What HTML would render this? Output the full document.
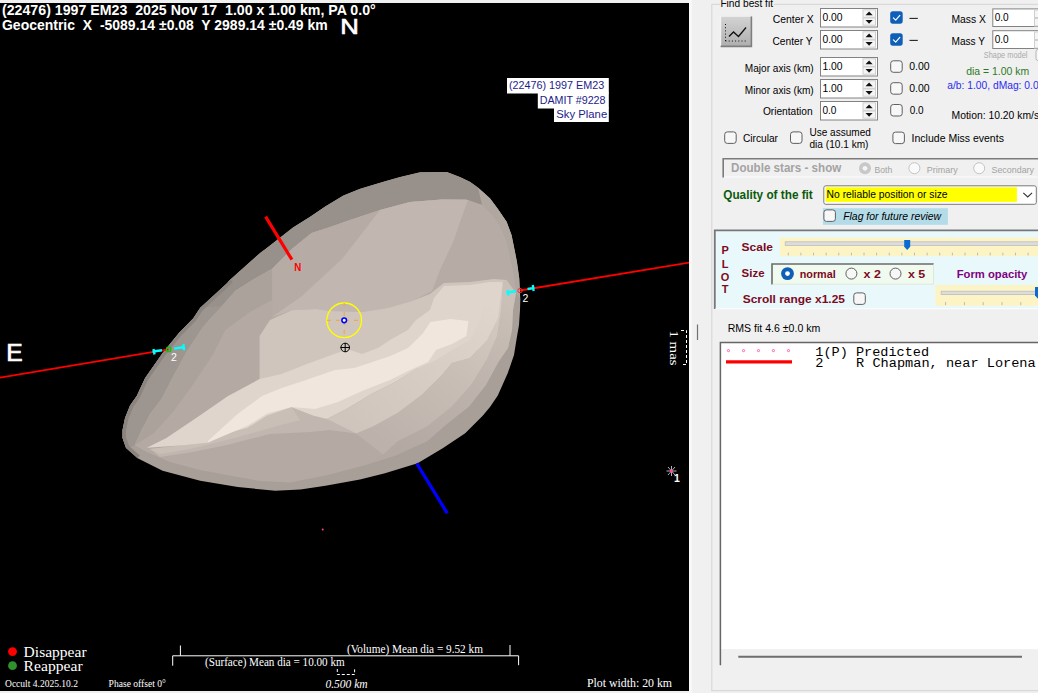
<!DOCTYPE html>
<html><head><meta charset="utf-8"><title>Occult</title>
<style>
html,body{margin:0;padding:0;}
body{width:1038px;height:693px;overflow:hidden;background:#f0f0f0;font-family:"Liberation Sans",sans-serif;position:relative;}
#plot{position:absolute;left:0;top:3px;width:689px;height:688px;background:#000;overflow:hidden;}
#plotin{position:absolute;left:0;top:-3px;width:689px;height:693px;}
#plotin svg{position:absolute;left:0;top:0;}
.t1{position:absolute;color:#fff;font:bold 14px "Liberation Sans",sans-serif;white-space:pre;line-height:16px;}
.big{position:absolute;color:#fff;font:23px "Liberation Sans",sans-serif;line-height:26px;-webkit-text-stroke:0.5px #fff;}
.lab{position:absolute;background:#fff;color:#1c1c8a;font:11px "Liberation Sans",sans-serif;height:15px;line-height:15px;text-align:right;box-sizing:border-box;padding-right:3px;white-space:pre;}
.ser{position:absolute;color:#fff;font-family:"Liberation Serif",serif;white-space:pre;line-height:1.15;}

</style></head>
<body>
<div id="plot"><div id="plotin">
<svg width="689" height="693" viewBox="0 0 689 693">
<defs><clipPath id="oc"><polygon points="420.0,172.3 447.0,172.0 460.0,177.0 470.0,181.7 478.0,187.6 490.0,198.3 498.0,209.0 506.7,221.7 511.6,235.0 515.0,251.7 517.0,262.0 519.3,278.3 520.3,300.0 520.0,310.0 519.0,325.0 516.7,338.3 514.0,355.0 507.8,373.0 497.8,395.6 490.0,407.0 482.7,415.7 465.2,433.2 442.7,448.2 417.6,463.3 385.0,473.3 360.0,479.5 325.5,485.8 300.4,489.5 275.3,490.8 237.8,487.0 200.2,480.8 162.6,470.8 137.6,458.2 126.0,448.0 122.5,438.0 122.5,430.0 125.0,418.0 130.0,405.6 136.7,396.0 145.1,378.0 162.6,353.0 178.9,333.0 193.3,318.3 200.2,307.8 226.7,283.5 230.3,279.5 260.3,252.7 266.7,248.0 292.9,227.6 310.0,216.7 325.5,206.3 343.3,195.6 360.0,188.8 385.0,181.3 400.0,177.0" fill="#000" /></clipPath><linearGradient id="gA" gradientUnits="userSpaceOnUse" x1="508" y1="300" x2="400" y2="450"><stop offset="0" stop-color="#cbc0b8"/><stop offset="0.45" stop-color="#bfb4ad"/><stop offset="1" stop-color="#b3a9a2"/></linearGradient><linearGradient id="gB" gradientUnits="userSpaceOnUse" x1="498" y1="300" x2="380" y2="440"><stop offset="0" stop-color="#d6cbc2"/><stop offset="0.5" stop-color="#c8bdb5"/><stop offset="1" stop-color="#bdb2ab"/></linearGradient><linearGradient id="gC" gradientUnits="userSpaceOnUse" x1="490" y1="300" x2="350" y2="420"><stop offset="0" stop-color="#e0d5cc"/><stop offset="1" stop-color="#d0c5bc"/></linearGradient></defs>
<polygon points="420.0,172.3 447.0,172.0 460.0,177.0 470.0,181.7 478.0,187.6 490.0,198.3 498.0,209.0 506.7,221.7 511.6,235.0 515.0,251.7 517.0,262.0 519.3,278.3 520.3,300.0 520.0,310.0 519.0,325.0 516.7,338.3 514.0,355.0 507.8,373.0 497.8,395.6 490.0,407.0 482.7,415.7 465.2,433.2 442.7,448.2 417.6,463.3 385.0,473.3 360.0,479.5 325.5,485.8 300.4,489.5 275.3,490.8 237.8,487.0 200.2,480.8 162.6,470.8 137.6,458.2 126.0,448.0 122.5,438.0 122.5,430.0 125.0,418.0 130.0,405.6 136.7,396.0 145.1,378.0 162.6,353.0 178.9,333.0 193.3,318.3 200.2,307.8 226.7,283.5 230.3,279.5 260.3,252.7 266.7,248.0 292.9,227.6 310.0,216.7 325.5,206.3 343.3,195.6 360.0,188.8 385.0,181.3 400.0,177.0" fill="#a89f98" />
<g clip-path="url(#oc)">
<polygon points="126.0,448.0 122.5,438.0 122.5,430.0 125.0,418.0 130.0,405.6 136.7,396.0 145.1,378.0 162.6,353.0 178.9,333.0 193.3,318.3 200.2,307.8 226.7,283.5 230.3,279.5 260.3,252.7 266.7,248.0 292.9,227.6 310.0,216.7 325.5,206.3 343.3,195.6 360.0,188.8 385.0,181.3 400.0,177.0 420.0,172.3 447.0,172.0 460.0,177.0 470.0,181.7 478.0,187.6 490.0,198.3 498.0,209.0 506.7,221.7 511.6,235.0 515.0,251.7 517.0,262.0 519.3,278.3 520.3,300.0 516.0,293.0 514.5,277.0 510.5,259.0 506.5,241.0 500.5,227.0 492.5,215.0 482.0,205.0 466.0,199.5 442.0,199.5 410.0,202.0 380.0,210.0 350.0,220.0 330.0,227.0 311.5,233.1 291.8,249.0 272.2,268.7 254.0,279.0 235.4,290.7 222.0,306.0 203.6,326.0 186.4,352.0 171.7,379.0 162.0,398.0 150.0,414.0 142.0,429.0 134.5,445.3" fill="#98908a" />
<polygon points="126.0,448.0 122.5,438.0 122.5,430.0 125.0,418.0 130.0,405.6 136.7,396.0 145.1,378.0 162.6,353.0 178.9,333.0 193.3,318.3 200.2,307.8 222.0,306.0 203.6,326.0 186.4,352.0 171.7,379.0 162.0,398.0 150.0,414.0 142.0,429.0 134.5,445.3" fill="#9d958f" />
<polyline points="137.6,458.2 126.0,448.0 122.5,438.0 122.5,430.0 125.0,418.0 130.0,405.6 136.7,396.0 145.1,378.0 162.6,353.0 178.9,333.0 193.3,318.3 200.2,307.8 226.7,283.5 230.3,279.5" fill="none" stroke="#8c847f" stroke-width="7" stroke-linejoin="round" />
<polygon points="478.0,187.6 490.0,198.3 498.0,209.0 506.7,221.7 511.6,235.0 515.0,251.7 517.0,262.0 519.3,278.3 520.3,300.0 516.0,293.0 514.5,277.0 510.5,259.0 506.5,241.0 500.5,227.0 492.5,215.0 482.0,205.0" fill="#b0a7a1" />
<polygon points="134.5,445.3 142.0,429.0 150.0,414.0 162.0,398.0 171.7,379.0 186.4,352.0 203.6,326.0 222.0,306.0 235.4,290.7 254.0,279.0 272.2,268.7 291.8,249.0 311.5,233.1 330.0,227.0 350.0,220.0 380.0,210.0 410.0,202.0 442.0,199.5 466.0,199.5 482.0,205.0 492.5,215.0 500.5,227.0 506.5,241.0 510.5,259.0 514.5,277.0 516.0,293.0 513.0,310.0 512.0,330.0 508.0,348.0 498.4,362.0 486.2,384.5 469.0,406.6 447.0,423.8 427.3,440.9 395.4,455.6 363.6,465.4 326.8,475.3 290.0,482.6 260.0,481.0 232.0,476.0 200.0,470.0 170.0,462.0 146.8,452.0" fill="#b4aaa3" />
<polygon points="134.5,445.3 142.0,429.0 150.0,414.0 162.0,398.0 171.7,379.0 186.4,352.0 203.6,326.0 222.0,306.0 235.4,290.7 254.0,279.0 272.2,268.7 272.0,300.0 250.0,312.0 225.3,330.0 213.0,354.5 193.4,384.0 173.8,410.9 154.1,433.0" fill="#aba29b" />
<polygon points="272.2,268.7 291.8,249.0 311.5,233.1 330.0,227.0 350.0,220.0 380.0,210.0 410.0,202.0 442.0,199.5 466.0,199.5 482.0,205.0 492.5,215.0 500.5,227.0 506.5,241.0 510.5,259.0 514.5,277.0 516.0,293.0 513.0,310.0 512.0,330.0 508.0,348.0 470.0,300.0 330.0,330.0 272.2,317.7" fill="#b6aca5" />
<polygon points="380.0,210.0 410.0,202.0 442.0,199.5 468.0,200.0 460.0,222.0 453.5,241.0 440.0,270.0 432.0,291.0 412.0,301.0 388.0,308.0 362.0,312.0 330.0,311.0 316.0,309.0 291.8,310.3 272.0,317.0 302.0,296.0 342.0,259.0 356.0,241.0" fill="#c2b7b0" />
<polygon points="259.6,380.0 259.6,336.0 270.0,320.0 291.8,310.3 316.0,309.0 330.0,311.0 362.0,312.0 388.0,308.0 412.0,301.0 430.0,294.0 440.0,286.0 444.0,283.0 470.0,282.0 494.0,279.0 506.5,280.0 503.0,283.0 501.0,310.0 497.0,336.0 486.4,360.0 470.0,340.0 400.0,360.0 300.0,380.0" fill="#d0c5bc" />
<polygon points="516.0,293.0 513.0,310.0 512.0,330.0 508.0,348.0 498.4,362.0 486.2,384.5 469.0,406.6 447.0,423.8 427.3,440.9 395.4,455.6 363.6,465.4 383.2,454.4 397.9,440.9 427.3,426.2 451.8,406.6 471.5,384.5 486.4,360.0 497.0,336.0 501.0,310.0 503.0,283.0 506.5,280.0" fill="url(#gA)" />
<polygon points="503.0,283.0 501.0,310.0 497.0,336.0 486.4,360.0 471.5,384.5 451.8,406.6 427.3,426.2 397.9,440.9 383.2,454.4 356.2,433.6 356.2,433.6 373.4,426.2 397.9,412.7 422.4,394.3 442.0,374.7 451.8,363.0 470.0,358.0 487.0,340.0 497.0,320.0 500.0,284.0" fill="url(#gB)" />
<polygon points="150.0,449.0 183.6,445.3 208.1,442.8 227.7,433.0 247.3,428.1 266.9,415.8 291.5,407.2 313.5,415.8 326.8,418.9 356.2,433.6 330.0,430.0 310.0,432.0 270.0,434.0 226.7,445.0 190.0,452.5 160.0,457.0" fill="#c2b7b0" />
<polygon points="150.0,449.0 183.6,445.3 208.1,442.8 227.7,433.0 247.3,428.1 266.9,415.8 291.5,407.2 300.0,420.0 270.0,428.0 226.7,440.0 190.0,449.0 160.0,454.0" fill="#cabfb7" />
<polygon points="146.8,447.7 166.4,437.9 195.8,418.3 227.7,396.2 259.6,379.0 281.7,374.1 306.2,364.3 340.0,352.1 350.0,350.0 362.0,354.0 378.0,348.0 390.0,340.0 408.0,330.0 416.0,320.0 430.0,310.0 434.0,298.0 444.0,286.0 470.0,285.0 490.0,282.0 502.5,282.0 498.0,318.0 486.0,338.0 468.0,354.0 450.0,362.0 436.0,372.0 417.5,368.6 395.4,382.1 370.9,394.3 346.4,409.0 326.8,418.9 313.5,415.8 291.5,407.2 266.9,415.8 247.3,428.1 227.7,433.0 208.1,442.8 183.6,445.3 146.8,447.7" fill="#e0d5cc" />
<polygon points="500.0,284.0 497.0,320.0 487.0,340.0 470.0,358.0 451.8,363.0 442.0,374.7 422.4,394.3 397.9,412.7 373.4,426.2 356.2,433.6 326.8,418.9 346.4,409.0 370.9,394.3 395.4,382.1 417.5,368.6 436.0,360.0 452.0,350.0 470.0,340.0 480.0,320.0 486.0,290.0" fill="url(#gC)" />
<polygon points="208.0,441.0 237.5,414.0 262.0,396.0 281.7,388.0 303.0,381.0 335.0,370.0 354.3,368.0 390.4,356.0 408.0,348.0 422.4,334.0 430.4,322.0 450.3,319.0 468.4,321.0 466.4,336.0 452.0,344.0 436.0,350.0 428.0,362.0 408.0,371.0 390.0,380.0 362.0,391.0 338.0,402.0 315.0,409.0 291.5,407.0 267.0,413.5 247.0,426.0 208.0,442.5" fill="#f0e6dd" />
</g>
<line x1="265.6" y1="216.7" x2="291.9" y2="259.7" stroke="#f00" stroke-width="3.2"/>
<line x1="416.7" y1="463.3" x2="447.3" y2="513.3" stroke="#00f" stroke-width="3.2"/>
<text x="294.3" y="270.8" fill="#f00" font-family="Liberation Sans" font-weight="bold" font-size="11" textLength="7" lengthAdjust="spacingAndGlyphs">N</text>
<line x1="0" y1="377.7" x2="168.5" y2="349.3" stroke="#f00" stroke-width="1.8"/>
<line x1="520" y1="290.5" x2="689.3" y2="262.5" stroke="#f00" stroke-width="1.8"/>
<path d="M152.5 351.5 L162 350.2 M153.5 349 L154.5 354.5" stroke="#0ff" stroke-width="2.4" fill="none"/>
<path d="M174 348.6 L184.5 347 M183.3 344.3 L184.2 350.2" stroke="#0ff" stroke-width="2.4" fill="none"/>
<circle cx="168.6" cy="349.4" r="2.3" fill="none" stroke="#0c0" stroke-width="1.2"/>
<text x="171" y="361" fill="#fff" font-family="Liberation Sans" font-size="10.5">2</text>
<path d="M506.5 292.8 L516 291.3 M507.6 290 L508.6 295.5" stroke="#0ff" stroke-width="2.4" fill="none"/>
<path d="M527.5 289 L534.5 287.9 M532.8 285 L533.7 291" stroke="#0ff" stroke-width="2.4" fill="none"/>
<circle cx="520" cy="290.6" r="2.2" fill="none" stroke="#e33" stroke-width="1"/>
<text x="522.5" y="302" fill="#fff" font-family="Liberation Sans" font-size="10.5">2</text>
<circle cx="344.2" cy="320.3" r="17.3" fill="none" stroke="#ff0" stroke-width="1.4"/>
<path d="M327 320.3 H361.5 M344.2 303 V337.5" stroke="#f5a623" stroke-width="1" stroke-dasharray="4 5" fill="none"/>
<circle cx="344.2" cy="320.3" r="2.3" fill="#fff" stroke="#00f" stroke-width="1.6"/>
<circle cx="345.2" cy="347.5" r="4.3" fill="none" stroke="#000" stroke-width="1"/>
<path d="M340.5 347.5 H350 M345.2 343 V352" stroke="#000" stroke-width="1" fill="none"/>
<circle cx="322.7" cy="529.5" r="1" fill="#f48"/>
<path d="M668 467 L675 475 M675 467 L668 475 M671.5 466 V476 M666.5 471 H676.5" stroke="#ddd" stroke-width="0.8"/>
<circle cx="671.5" cy="471" r="1.6" fill="#f4a"/>
<text x="674" y="482" fill="#fff" font-family="Liberation Sans" font-weight="bold" font-size="10.5">1</text>
<circle cx="12.5" cy="651.6" r="4.4" fill="#f00"/>
<circle cx="12.5" cy="665.7" r="4.4" fill="#2f922f"/>
<path d="M172.7 665.7 V655.8 H518.6 V665.2 M180.4 655.8 V645.5 M510 655.8 V645" stroke="#fff" stroke-width="1" fill="none"/>
<path d="M337.3 669 V674.5 H354.6 V669" stroke="#fff" stroke-width="1" fill="none" stroke-dasharray="3 2"/>
<path d="M681 330.5 H686.5 V364.5 H681" stroke="#fff" stroke-width="1" fill="none" stroke-dasharray="3 2"/>
</svg>
<svg width="689" height="693" viewBox="0 0 689 693">
<text x="2" y="14.5" font-family="Liberation Sans" font-size="14.3" fill="#fff" font-weight="bold" font-style="normal" xml:space="preserve" textLength="373.7" lengthAdjust="spacingAndGlyphs" >(22476) 1997 EM23  2025 Nov 17  1.00 x 1.00 km, PA 0.0°</text>
<text x="2" y="30" font-family="Liberation Sans" font-size="14.3" fill="#fff" font-weight="bold" font-style="normal" xml:space="preserve" textLength="325.7" lengthAdjust="spacingAndGlyphs" >Geocentric  X  -5089.14 ±0.08  Y 2989.14 ±0.49 km</text>
<text x="340.3" y="33.7" font-family="Liberation Sans" font-size="22.6" fill="#fff" font-weight="normal" font-style="normal" xml:space="preserve" textLength="18.6" lengthAdjust="spacingAndGlyphs" stroke="#fff" stroke-width="0.7">N</text>
<text x="6.2" y="361" font-family="Liberation Sans" font-size="23.4" fill="#fff" font-weight="normal" font-style="normal" xml:space="preserve" textLength="16.4" lengthAdjust="spacingAndGlyphs" stroke="#fff" stroke-width="0.7">E</text>
<rect x="507" y="78" width="101.8" height="15.5" fill="#fff"/><rect x="537.8" y="92.5" width="71" height="16" fill="#fff"/><rect x="554" y="107.5" width="54.8" height="14.5" fill="#fff"/>
<text x="508.9" y="88.9" font-family="Liberation Sans" font-size="11" fill="#1c1c8a" font-weight="normal" font-style="normal" xml:space="preserve" textLength="95.3" lengthAdjust="spacingAndGlyphs" >(22476) 1997 EM23</text>
<text x="539.7" y="103.9" font-family="Liberation Sans" font-size="11" fill="#1c1c8a" font-weight="normal" font-style="normal" xml:space="preserve" textLength="65.8" lengthAdjust="spacingAndGlyphs" >DAMIT #9228</text>
<text x="556.3" y="117.8" font-family="Liberation Sans" font-size="11" fill="#1c1c8a" font-weight="normal" font-style="normal" xml:space="preserve" textLength="50.9" lengthAdjust="spacingAndGlyphs" >Sky Plane</text>
<text x="23.6" y="656.6" font-family="Liberation Serif" font-size="14.6" fill="#fff" font-weight="normal" font-style="normal" xml:space="preserve" textLength="63" lengthAdjust="spacingAndGlyphs" >Disappear</text>
<text x="23.6" y="670.8" font-family="Liberation Serif" font-size="14.6" fill="#fff" font-weight="normal" font-style="normal" xml:space="preserve" textLength="59" lengthAdjust="spacingAndGlyphs" >Reappear</text>
<text x="5" y="687" font-family="Liberation Serif" font-size="10" fill="#fff" font-weight="normal" font-style="normal" xml:space="preserve" textLength="73" lengthAdjust="spacingAndGlyphs" >Occult 4.2025.10.2</text>
<text x="108.6" y="687" font-family="Liberation Serif" font-size="10" fill="#fff" font-weight="normal" font-style="normal" xml:space="preserve" textLength="57.3" lengthAdjust="spacingAndGlyphs" >Phase offset 0°</text>
<text x="205" y="665.7" font-family="Liberation Serif" font-size="11.5" fill="#fff" font-weight="normal" font-style="normal" xml:space="preserve" textLength="139.6" lengthAdjust="spacingAndGlyphs" >(Surface) Mean dia = 10.00 km</text>
<text x="346.9" y="652.7" font-family="Liberation Serif" font-size="11.5" fill="#fff" font-weight="normal" font-style="normal" xml:space="preserve" textLength="136" lengthAdjust="spacingAndGlyphs" >(Volume) Mean dia = 9.52 km</text>
<text x="325.4" y="688.2" font-family="Liberation Serif" font-size="12" fill="#fff" font-weight="normal" font-style="italic" xml:space="preserve" textLength="42.3" lengthAdjust="spacingAndGlyphs" >0.500 km</text>
<text x="587" y="687.4" font-family="Liberation Serif" font-size="12.5" fill="#fff" font-weight="normal" font-style="normal" xml:space="preserve" textLength="85" lengthAdjust="spacingAndGlyphs" >Plot width: 20 km</text>
<g transform="translate(669.5,330.5) rotate(90)"><text x="0" y="0" font-family="Liberation Serif" font-size="13" fill="#fff" font-weight="normal" font-style="normal" xml:space="preserve" textLength="35" lengthAdjust="spacingAndGlyphs" >1 mas</text></g>
</svg>
</div></div>
<svg id="panel" width="349" height="693" viewBox="689 0 349 693" style="position:absolute;left:689px;top:0;">
<rect x="689" y="0" width="349" height="693" fill="#f0f0f0" />
<rect x="689" y="0" width="3" height="693" fill="#f8f8f8" />
<line x1="697.5" y1="324.5" x2="697.5" y2="340" stroke="#707070" stroke-width="1.2" />
<path d="M720 4.3 H711.8 V690.7 H1040 M774 4.3 H1040" stroke="#d9d9d9" stroke-width="1.2" fill="none"/>
<text x="720.4" y="7.24" font-family="Liberation Sans" font-size="11" fill="#000" font-weight="normal" font-style="normal" text-anchor="start" xml:space="preserve" textLength="52.6" lengthAdjust="spacingAndGlyphs" >Find best fit</text>
<defs><linearGradient id="bg1" x1="0" y1="0" x2="0" y2="1"><stop offset="0" stop-color="#d4d4d4"/><stop offset="1" stop-color="#aeaeae"/></linearGradient></defs>
<rect x="720" y="15.5" width="32" height="31.5" fill="url(#bg1)" />
<path d="M720.5 46.5 V16 H751.5" stroke="#f4f4f4" stroke-width="1.4" fill="none"/>
<path d="M720.8 46.4 H751.4 V16.4" stroke="#7e7e7e" stroke-width="1.6" fill="none"/>
<path d="M725.5 24 V41.5 M725.5 41 H747" stroke="#111" stroke-width="1" stroke-dasharray="1 2.2" fill="none"/>
<path d="M729 36.5 L733.5 32 L738.5 36.5 L746 27.5" stroke="#111" stroke-width="1.3" fill="none"/>
<text x="772.7" y="22.74" font-family="Liberation Sans" font-size="11" fill="#000" font-weight="normal" font-style="normal" text-anchor="start" xml:space="preserve" textLength="41" lengthAdjust="spacingAndGlyphs" >Center X</text>
<text x="772.5" y="44.54" font-family="Liberation Sans" font-size="11" fill="#000" font-weight="normal" font-style="normal" text-anchor="start" xml:space="preserve" textLength="40" lengthAdjust="spacingAndGlyphs" >Center Y</text>
<text x="744.8" y="71.84" font-family="Liberation Sans" font-size="11" fill="#000" font-weight="normal" font-style="normal" text-anchor="start" xml:space="preserve" textLength="68.9" lengthAdjust="spacingAndGlyphs" >Major axis (km)</text>
<text x="744.8" y="93.64" font-family="Liberation Sans" font-size="11" fill="#000" font-weight="normal" font-style="normal" text-anchor="start" xml:space="preserve" textLength="68.9" lengthAdjust="spacingAndGlyphs" >Minor axis (km)</text>
<text x="762.9" y="114.54" font-family="Liberation Sans" font-size="11" fill="#000" font-weight="normal" font-style="normal" text-anchor="start" xml:space="preserve" textLength="49.8" lengthAdjust="spacingAndGlyphs" >Orientation</text>
<rect x="820.5" y="8.5" width="57" height="18.5" fill="#fff" stroke="#828282" stroke-width="1" />
<text x="822.4" y="21.09" font-family="Liberation Sans" font-size="11" fill="#000" font-weight="normal" font-style="normal" text-anchor="start" xml:space="preserve" textLength="20.1" lengthAdjust="spacingAndGlyphs" >0.00</text>
<rect x="863.0" y="9.8" width="12.5" height="7.5" fill="#f5f5f5" stroke="#cfcfcf" stroke-width="1" />
<rect x="863.0" y="18" width="12.5" height="7.2" fill="#f5f5f5" stroke="#cfcfcf" stroke-width="1" />
<path d="M865.5 15.35 L869.1 11.55 L872.7 15.35 Z" fill="#111"/>
<path d="M865.5 19.95 L869.1 23.75 L872.7 19.95 Z" fill="#111"/>
<rect x="820.5" y="30.5" width="57" height="18.5" fill="#fff" stroke="#828282" stroke-width="1" />
<text x="822.4" y="43.09" font-family="Liberation Sans" font-size="11" fill="#000" font-weight="normal" font-style="normal" text-anchor="start" xml:space="preserve" textLength="20.1" lengthAdjust="spacingAndGlyphs" >0.00</text>
<rect x="863.0" y="31.8" width="12.5" height="7.5" fill="#f5f5f5" stroke="#cfcfcf" stroke-width="1" />
<rect x="863.0" y="40" width="12.5" height="7.2" fill="#f5f5f5" stroke="#cfcfcf" stroke-width="1" />
<path d="M865.5 37.35 L869.1 33.55 L872.7 37.35 Z" fill="#111"/>
<path d="M865.5 41.95 L869.1 45.75 L872.7 41.95 Z" fill="#111"/>
<rect x="820.5" y="57.5" width="57" height="18.5" fill="#fff" stroke="#828282" stroke-width="1" />
<text x="822.4" y="70.09" font-family="Liberation Sans" font-size="11" fill="#000" font-weight="normal" font-style="normal" text-anchor="start" xml:space="preserve" textLength="20.1" lengthAdjust="spacingAndGlyphs" >1.00</text>
<rect x="863.0" y="58.8" width="12.5" height="7.5" fill="#f5f5f5" stroke="#cfcfcf" stroke-width="1" />
<rect x="863.0" y="67" width="12.5" height="7.2" fill="#f5f5f5" stroke="#cfcfcf" stroke-width="1" />
<path d="M865.5 64.35 L869.1 60.55 L872.7 64.35 Z" fill="#111"/>
<path d="M865.5 68.95 L869.1 72.75 L872.7 68.95 Z" fill="#111"/>
<rect x="820.5" y="79.5" width="57" height="18.5" fill="#fff" stroke="#828282" stroke-width="1" />
<text x="822.4" y="92.09" font-family="Liberation Sans" font-size="11" fill="#000" font-weight="normal" font-style="normal" text-anchor="start" xml:space="preserve" textLength="20.1" lengthAdjust="spacingAndGlyphs" >1.00</text>
<rect x="863.0" y="80.8" width="12.5" height="7.5" fill="#f5f5f5" stroke="#cfcfcf" stroke-width="1" />
<rect x="863.0" y="89" width="12.5" height="7.2" fill="#f5f5f5" stroke="#cfcfcf" stroke-width="1" />
<path d="M865.5 86.35 L869.1 82.55 L872.7 86.35 Z" fill="#111"/>
<path d="M865.5 90.95 L869.1 94.75 L872.7 90.95 Z" fill="#111"/>
<rect x="820.5" y="101.5" width="57" height="18.5" fill="#fff" stroke="#828282" stroke-width="1" />
<text x="822.4" y="114.09" font-family="Liberation Sans" font-size="11" fill="#000" font-weight="normal" font-style="normal" text-anchor="start" xml:space="preserve" textLength="14" lengthAdjust="spacingAndGlyphs" >0.0</text>
<rect x="863.0" y="102.8" width="12.5" height="7.5" fill="#f5f5f5" stroke="#cfcfcf" stroke-width="1" />
<rect x="863.0" y="111" width="12.5" height="7.2" fill="#f5f5f5" stroke="#cfcfcf" stroke-width="1" />
<path d="M865.5 108.35 L869.1 104.55 L872.7 108.35 Z" fill="#111"/>
<path d="M865.5 112.95 L869.1 116.75 L872.7 112.95 Z" fill="#111"/>
<rect x="890.2" y="11.2" width="12.5" height="12.5" fill="#0f5fb9" rx="2.6" />
<path d="M893.4000000000001 17.799999999999997 L895.7 20.1 L899.8000000000001 15.399999999999999" stroke="#fff" stroke-width="1.2" fill="none" stroke-linecap="round" stroke-linejoin="round"/>
<rect x="890.2" y="33.2" width="12.5" height="12.5" fill="#0f5fb9" rx="2.6" />
<path d="M893.4000000000001 39.800000000000004 L895.7 42.1 L899.8000000000001 37.400000000000006" stroke="#fff" stroke-width="1.2" fill="none" stroke-linecap="round" stroke-linejoin="round"/>
<rect x="890.7" y="60.8" width="11.5" height="11.5" fill="#f7f7f7" stroke="#5f5f5f" stroke-width="1" rx="2.6" />
<rect x="890.7" y="82.7" width="11.5" height="11.5" fill="#f7f7f7" stroke="#5f5f5f" stroke-width="1" rx="2.6" />
<rect x="890.7" y="104.5" width="11.5" height="11.5" fill="#f7f7f7" stroke="#5f5f5f" stroke-width="1" rx="2.6" />
<line x1="909.5" y1="18.4" x2="917.8" y2="18.4" stroke="#222" stroke-width="1.1" />
<line x1="909.5" y1="40.4" x2="917.8" y2="40.4" stroke="#222" stroke-width="1.1" />
<text x="909.3" y="70.34" font-family="Liberation Sans" font-size="11" fill="#000" font-weight="normal" font-style="normal" text-anchor="start" xml:space="preserve" textLength="20.4" lengthAdjust="spacingAndGlyphs" >0.00</text>
<text x="909.3" y="92.24" font-family="Liberation Sans" font-size="11" fill="#000" font-weight="normal" font-style="normal" text-anchor="start" xml:space="preserve" textLength="20.4" lengthAdjust="spacingAndGlyphs" >0.00</text>
<text x="909.7" y="114.44" font-family="Liberation Sans" font-size="11" fill="#000" font-weight="normal" font-style="normal" text-anchor="start" xml:space="preserve" textLength="13.9" lengthAdjust="spacingAndGlyphs" >0.0</text>
<text x="951.5" y="22.94" font-family="Liberation Sans" font-size="11" fill="#000" font-weight="normal" font-style="normal" text-anchor="start" xml:space="preserve" textLength="34.5" lengthAdjust="spacingAndGlyphs" >Mass X</text>
<text x="951.5" y="44.94" font-family="Liberation Sans" font-size="11" fill="#000" font-weight="normal" font-style="normal" text-anchor="start" xml:space="preserve" textLength="33.5" lengthAdjust="spacingAndGlyphs" >Mass Y</text>
<rect x="992.8" y="8.9" width="59" height="17.6" fill="#fff" stroke="#828282" stroke-width="1" />
<text x="994.6999999999999" y="21.04" font-family="Liberation Sans" font-size="11" fill="#000" font-weight="normal" font-style="normal" text-anchor="start" xml:space="preserve" textLength="14" lengthAdjust="spacingAndGlyphs" >0.0</text>
<rect x="992.8" y="30.7" width="59" height="17.8" fill="#fff" stroke="#828282" stroke-width="1" />
<text x="994.6999999999999" y="42.94" font-family="Liberation Sans" font-size="11" fill="#000" font-weight="normal" font-style="normal" text-anchor="start" xml:space="preserve" textLength="14" lengthAdjust="spacingAndGlyphs" >0.0</text>
<rect x="1034.5" y="10" width="6" height="7.5" fill="#f5f5f5" stroke="#cfcfcf" stroke-width="1" />
<rect x="1034.5" y="18.5" width="6" height="7.5" fill="#f5f5f5" stroke="#cfcfcf" stroke-width="1" />
<rect x="1034.5" y="32" width="6" height="7.5" fill="#f5f5f5" stroke="#cfcfcf" stroke-width="1" />
<rect x="1034.5" y="40.5" width="6" height="7.5" fill="#f5f5f5" stroke="#cfcfcf" stroke-width="1" />
<text x="983.8" y="58.04" font-family="Liberation Sans" font-size="8.5" fill="#a9a9a9" font-weight="normal" font-style="normal" text-anchor="start" xml:space="preserve" textLength="43.6" lengthAdjust="spacingAndGlyphs" >Shape model</text>
<rect x="1036" y="49.5" width="8" height="11" fill="#f7f7f7" stroke="#b5b5b5" stroke-width="1" rx="2" />
<text x="966.2" y="75.14" font-family="Liberation Sans" font-size="11" fill="#2d7a1e" font-weight="normal" font-style="normal" text-anchor="start" xml:space="preserve" textLength="62.9" lengthAdjust="spacingAndGlyphs" >dia = 1.00 km</text>
<text x="947.3" y="89.44" font-family="Liberation Sans" font-size="11" fill="#2b2bf0" font-weight="normal" font-style="normal" text-anchor="start" xml:space="preserve" textLength="97" lengthAdjust="spacingAndGlyphs" >a/b: 1.00, dMag: 0.00</text>
<text x="951.6" y="119.14" font-family="Liberation Sans" font-size="11" fill="#000" font-weight="normal" font-style="normal" text-anchor="start" xml:space="preserve" textLength="87.5" lengthAdjust="spacingAndGlyphs" >Motion: 10.20 km/s</text>
<rect x="724.7" y="131.9" width="11.5" height="11.5" fill="#f7f7f7" stroke="#5f5f5f" stroke-width="1" rx="2.6" />
<text x="742.9" y="141.94" font-family="Liberation Sans" font-size="11" fill="#000" font-weight="normal" font-style="normal" text-anchor="start" xml:space="preserve" textLength="35.1" lengthAdjust="spacingAndGlyphs" >Circular</text>
<rect x="790.5" y="131.9" width="11.5" height="11.5" fill="#f7f7f7" stroke="#5f5f5f" stroke-width="1" rx="2.6" />
<text x="809.5" y="135.76" font-family="Liberation Sans" font-size="10.5" fill="#000" font-weight="normal" font-style="normal" text-anchor="start" xml:space="preserve" textLength="61.3" lengthAdjust="spacingAndGlyphs" >Use assumed</text>
<text x="809.5" y="147.96" font-family="Liberation Sans" font-size="10.5" fill="#000" font-weight="normal" font-style="normal" text-anchor="start" xml:space="preserve" textLength="59" lengthAdjust="spacingAndGlyphs" >dia (10.1 km)</text>
<rect x="892.9" y="132.1" width="11.5" height="11.5" fill="#f7f7f7" stroke="#5f5f5f" stroke-width="1" rx="2.6" />
<text x="911.6" y="141.94" font-family="Liberation Sans" font-size="11" fill="#000" font-weight="normal" font-style="normal" text-anchor="start" xml:space="preserve" textLength="92.3" lengthAdjust="spacingAndGlyphs" >Include Miss events</text>
<rect x="722.5" y="158" width="330" height="19" fill="#f0f0f0" />
<path d="M723.2 177.5 V158.8 H1040" stroke="#7b7b7b" stroke-width="1.6" fill="none"/>
<path d="M724 177 H1040" stroke="#fcfcfc" stroke-width="1.2" fill="none"/>
<text x="731" y="172.30" font-family="Liberation Sans" font-size="12" fill="#a3a3a3" font-weight="bold" font-style="normal" text-anchor="start" xml:space="preserve" textLength="110.3" lengthAdjust="spacingAndGlyphs" >Double stars - show</text>
<circle cx="865" cy="168.3" r="6" fill="#c8c8c8"/><circle cx="865" cy="168.3" r="2.4" fill="#f4f4f4"/>
<text x="874.5" y="172.90" font-family="Liberation Sans" font-size="9.5" fill="#a3a3a3" font-weight="normal" font-style="normal" text-anchor="start" xml:space="preserve" textLength="17.7" lengthAdjust="spacingAndGlyphs" >Both</text>
<circle cx="914.4" cy="168.2" r="5.5" fill="#fafafa" stroke="#c4c4c4" stroke-width="1"/>
<text x="926.8" y="172.90" font-family="Liberation Sans" font-size="9.5" fill="#a3a3a3" font-weight="normal" font-style="normal" text-anchor="start" xml:space="preserve" textLength="30.9" lengthAdjust="spacingAndGlyphs" >Primary</text>
<circle cx="979.2" cy="168.2" r="5.5" fill="#fafafa" stroke="#c4c4c4" stroke-width="1"/>
<text x="991.5" y="172.90" font-family="Liberation Sans" font-size="9.5" fill="#a3a3a3" font-weight="normal" font-style="normal" text-anchor="start" xml:space="preserve" textLength="42.5" lengthAdjust="spacingAndGlyphs" >Secondary</text>
<text x="723.3" y="198.90" font-family="Liberation Sans" font-size="12" fill="#0b5a0b" font-weight="bold" font-style="normal" text-anchor="start" xml:space="preserve" textLength="89.5" lengthAdjust="spacingAndGlyphs" >Quality of the fit</text>
<rect x="823.8" y="185.8" width="212.5" height="18.5" fill="#fff" stroke="#7a7a7a" stroke-width="1" rx="2" />
<rect x="825.6" y="187.3" width="191.3" height="14.6" fill="#ffff00" />
<text x="826.6" y="198.24" font-family="Liberation Sans" font-size="11" fill="#000" font-weight="normal" font-style="normal" text-anchor="start" xml:space="preserve" textLength="121" lengthAdjust="spacingAndGlyphs" >No reliable position or size</text>
<path d="M1023.3 192.8 L1027.7 197 L1032.1 192.8" stroke="#333" stroke-width="1.1" fill="none"/>
<rect x="822.9" y="208.2" width="125" height="16.6" fill="#b4dbe8" />
<rect x="823.9" y="209.9" width="11.5" height="11.5" fill="#f7f7f7" stroke="#5f5f5f" stroke-width="1" rx="2.6" />
<text x="843.2" y="220.04" font-family="Liberation Sans" font-size="11" fill="#000" font-weight="normal" font-style="italic" text-anchor="start" xml:space="preserve" textLength="97.9" lengthAdjust="spacingAndGlyphs" >Flag for future review</text>
<rect x="714" y="229.5" width="330" height="79.5" fill="#e9f9fb" />
<path d="M714.8 309 V230.3 H1040" stroke="#777" stroke-width="1.8" fill="none"/>
<path d="M715.5 308.7 H1040" stroke="#fdfdfd" stroke-width="1" fill="none"/>
<text x="725.1" y="253.94" font-family="Liberation Sans" font-size="11" fill="#7d0a1e" font-weight="bold" font-style="normal" text-anchor="middle" xml:space="preserve" >P</text>
<text x="725.1" y="267.94" font-family="Liberation Sans" font-size="11" fill="#7d0a1e" font-weight="bold" font-style="normal" text-anchor="middle" xml:space="preserve" >L</text>
<text x="725.1" y="280.94" font-family="Liberation Sans" font-size="11" fill="#7d0a1e" font-weight="bold" font-style="normal" text-anchor="middle" xml:space="preserve" >O</text>
<text x="725.1" y="293.44" font-family="Liberation Sans" font-size="11" fill="#7d0a1e" font-weight="bold" font-style="normal" text-anchor="middle" xml:space="preserve" >T</text>
<text x="741.6" y="250.74" font-family="Liberation Sans" font-size="11" fill="#7d0a1e" font-weight="bold" font-style="normal" text-anchor="start" xml:space="preserve" textLength="31.3" lengthAdjust="spacingAndGlyphs" >Scale</text>
<text x="741.6" y="277.04" font-family="Liberation Sans" font-size="11" fill="#7d0a1e" font-weight="bold" font-style="normal" text-anchor="start" xml:space="preserve" textLength="22.9" lengthAdjust="spacingAndGlyphs" >Size</text>
<text x="742.7" y="302.64" font-family="Liberation Sans" font-size="11" fill="#7d0a1e" font-weight="bold" font-style="normal" text-anchor="start" xml:space="preserve" textLength="102.3" lengthAdjust="spacingAndGlyphs" >Scroll range x1.25</text>
<rect x="780" y="237.6" width="260" height="18.6" fill="#fdf4c6" />
<rect x="785.2" y="241.8" width="260" height="3.6" fill="#dcdcdc" stroke="#bdbdbd" stroke-width="0.8" />
<line x1="788.3" y1="252.7" x2="788.3" y2="255.4" stroke="#b9b9b9" stroke-width="1" />
<line x1="800.92" y1="252.7" x2="800.92" y2="255.4" stroke="#b9b9b9" stroke-width="1" />
<line x1="813.54" y1="252.7" x2="813.54" y2="255.4" stroke="#b9b9b9" stroke-width="1" />
<line x1="826.16" y1="252.7" x2="826.16" y2="255.4" stroke="#b9b9b9" stroke-width="1" />
<line x1="838.78" y1="252.7" x2="838.78" y2="255.4" stroke="#b9b9b9" stroke-width="1" />
<line x1="851.4" y1="252.7" x2="851.4" y2="255.4" stroke="#b9b9b9" stroke-width="1" />
<line x1="864.02" y1="252.7" x2="864.02" y2="255.4" stroke="#b9b9b9" stroke-width="1" />
<line x1="876.64" y1="252.7" x2="876.64" y2="255.4" stroke="#b9b9b9" stroke-width="1" />
<line x1="889.26" y1="252.7" x2="889.26" y2="255.4" stroke="#b9b9b9" stroke-width="1" />
<line x1="901.88" y1="252.7" x2="901.88" y2="255.4" stroke="#b9b9b9" stroke-width="1" />
<line x1="914.5" y1="252.7" x2="914.5" y2="255.4" stroke="#b9b9b9" stroke-width="1" />
<line x1="927.12" y1="252.7" x2="927.12" y2="255.4" stroke="#b9b9b9" stroke-width="1" />
<line x1="939.74" y1="252.7" x2="939.74" y2="255.4" stroke="#b9b9b9" stroke-width="1" />
<line x1="952.36" y1="252.7" x2="952.36" y2="255.4" stroke="#b9b9b9" stroke-width="1" />
<line x1="964.98" y1="252.7" x2="964.98" y2="255.4" stroke="#b9b9b9" stroke-width="1" />
<line x1="977.6" y1="252.7" x2="977.6" y2="255.4" stroke="#b9b9b9" stroke-width="1" />
<line x1="990.22" y1="252.7" x2="990.22" y2="255.4" stroke="#b9b9b9" stroke-width="1" />
<line x1="1002.84" y1="252.7" x2="1002.84" y2="255.4" stroke="#b9b9b9" stroke-width="1" />
<line x1="1015.46" y1="252.7" x2="1015.46" y2="255.4" stroke="#b9b9b9" stroke-width="1" />
<line x1="1028.08" y1="252.7" x2="1028.08" y2="255.4" stroke="#b9b9b9" stroke-width="1" />
<path d="M904.2 240 H910.2 V246.8 L907.2 249.9 L904.2 246.8 Z" fill="#0a6cd0"/>
<rect x="771.2" y="263.2" width="162.5" height="21.2" fill="#f1faee" />
<path d="M772 284.4 V264 H933.7" stroke="#6b6b6b" stroke-width="1.6" fill="none"/>
<path d="M772.5 284.2 H933.5 V264.5" stroke="#dfe8dc" stroke-width="1" fill="none"/>
<circle cx="787.5" cy="273.6" r="6.4" fill="#0f5fb9"/><circle cx="787.5" cy="273.6" r="2.4" fill="#fff"/>
<text x="799.7" y="277.54" font-family="Liberation Sans" font-size="11" fill="#7d0a1e" font-weight="bold" font-style="normal" text-anchor="start" xml:space="preserve" textLength="36.1" lengthAdjust="spacingAndGlyphs" >normal</text>
<circle cx="851.4" cy="273.6" r="5.5" fill="#f7f7f7" stroke="#5f5f5f" stroke-width="1"/>
<text x="863.6" y="277.54" font-family="Liberation Sans" font-size="11" fill="#7d0a1e" font-weight="bold" font-style="normal" text-anchor="start" xml:space="preserve" textLength="17.3" lengthAdjust="spacingAndGlyphs" >x 2</text>
<circle cx="895.5" cy="273.6" r="5.5" fill="#f7f7f7" stroke="#5f5f5f" stroke-width="1"/>
<text x="907.9" y="277.54" font-family="Liberation Sans" font-size="11" fill="#7d0a1e" font-weight="bold" font-style="normal" text-anchor="start" xml:space="preserve" textLength="17.3" lengthAdjust="spacingAndGlyphs" >x 5</text>
<text x="956.7" y="278.04" font-family="Liberation Sans" font-size="11" fill="#800080" font-weight="bold" font-style="normal" text-anchor="start" xml:space="preserve" textLength="70.7" lengthAdjust="spacingAndGlyphs" >Form opacity</text>
<rect x="853.8" y="292.9" width="11.5" height="11.5" fill="#f7f7f7" stroke="#5f5f5f" stroke-width="1" rx="2.6" />
<rect x="935.2" y="285" width="110" height="20.8" fill="#fdf4c6" />
<rect x="941.2" y="291.2" width="100" height="3.4" fill="#dcdcdc" stroke="#bdbdbd" stroke-width="0.8" />
<line x1="945.6" y1="302.1" x2="945.6" y2="305.2" stroke="#b9b9b9" stroke-width="1" />
<line x1="964.4" y1="302.1" x2="964.4" y2="305.2" stroke="#b9b9b9" stroke-width="1" />
<line x1="983.1999999999999" y1="302.1" x2="983.1999999999999" y2="305.2" stroke="#b9b9b9" stroke-width="1" />
<line x1="1001.9999999999999" y1="302.1" x2="1001.9999999999999" y2="305.2" stroke="#b9b9b9" stroke-width="1" />
<line x1="1020.7999999999998" y1="302.1" x2="1020.7999999999998" y2="305.2" stroke="#b9b9b9" stroke-width="1" />
<line x1="1039.6" y1="302.1" x2="1039.6" y2="305.2" stroke="#b9b9b9" stroke-width="1" />
<path d="M1035 287 H1041 V295.6 L1038 298.8 L1035 295.6 Z" fill="#0a6cd0"/>
<text x="727.7" y="331.54" font-family="Liberation Sans" font-size="11" fill="#000" font-weight="normal" font-style="normal" text-anchor="start" xml:space="preserve" textLength="92.6" lengthAdjust="spacingAndGlyphs" >RMS fit 4.6 ±0.0 km</text>
<rect x="720" y="342" width="330" height="307.5" fill="#fff" />
<rect x="720" y="649.3" width="330" height="16.2" fill="#f0f0f0" />
<path d="M720.4 665.3 V342.5 H1040" stroke="#666" stroke-width="1.5" fill="none"/>
<line x1="738.3" y1="656.8" x2="1022" y2="656.8" stroke="#6e6e6e" stroke-width="2" />
<circle cx="728.5" cy="350.6" r="1.1" fill="#fff" stroke="#ff5fae" stroke-width="1"/>
<circle cx="743.5" cy="350.6" r="1.1" fill="#fff" stroke="#ff5fae" stroke-width="1"/>
<circle cx="758.5" cy="350.6" r="1.1" fill="#fff" stroke="#ff5fae" stroke-width="1"/>
<circle cx="773.4" cy="350.6" r="1.1" fill="#fff" stroke="#ff5fae" stroke-width="1"/>
<circle cx="788.5" cy="350.6" r="1.1" fill="#fff" stroke="#ff5fae" stroke-width="1"/>
<line x1="726" y1="361.8" x2="792" y2="361.8" stroke="#f00" stroke-width="3.3" />
<text x="815.3" y="355.76" font-family="Liberation Mono" font-size="12" fill="#000" font-weight="normal" font-style="normal" text-anchor="start" xml:space="preserve" textLength="113.79999999999998" lengthAdjust="spacingAndGlyphs" >1(P) Predicted</text>
<text x="815.3" y="367.16" font-family="Liberation Mono" font-size="12" fill="#000" font-weight="normal" font-style="normal" text-anchor="start" xml:space="preserve" textLength="220.39999999999998" lengthAdjust="spacingAndGlyphs" >2    R Chapman, near Lorena</text>
</svg>
</body></html>
